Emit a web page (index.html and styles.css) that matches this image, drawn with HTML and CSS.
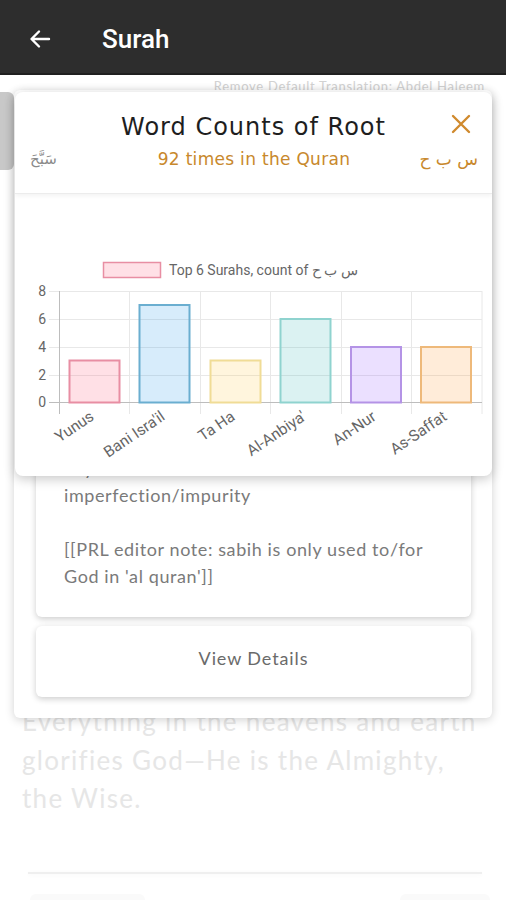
FILE: index.html
```html
<!DOCTYPE html>
<html lang="en">
<head>
    <meta charset="UTF-8">
    <meta name="viewport" content="width=device-width, initial-scale=1.0">
    <title>Surah</title>
    <link rel="stylesheet" href="styles.css">
</head>
<body>
    <header class="appbar">
        <svg class="back" width="24" height="24" viewBox="0 0 24 24">
            <path d="M21 12H4M11 4.5L3.5 12l7.5 7.5" fill="none" stroke="#fff" stroke-width="2.4" stroke-linecap="round" stroke-linejoin="round"/>
        </svg>
        <span class="appbar-title">Surah</span>
    </header>

    <main class="page">
        <p class="translation-note">Remove Default Translation: Abdel Haleem</p>
        <div class="verse-space"></div>
        <p class="verse-text">Everything in the heavens and earth glorifies God—He is the Almighty, the Wise.</p>
        <hr class="divider">
        <div class="verse-actions">
            <span class="ghost-btn"></span>
            <span class="ghost-btn small"></span>
        </div>

        <!-- root details sheet (behind the chart popup) -->
        <div class="side-tab"></div>
        <div class="root-sheet">
            <div class="meaning-card">
                <p>glorify, praise, exalt, declare God free from any</p>
                <p>imperfection/impurity</p>
                <p>&nbsp;</p>
                <p>[[PRL editor note: sabih is only used to/for God in 'al quran']]</p>
            </div>
            <div class="details-card">View Details</div>
        </div>

        <!-- word counts popup -->
        <div class="counts-popup">
            <div class="popup-head">
                <h2 class="popup-title">Word Counts of Root</h2>
                <span class="popup-close">
                    <svg width="22" height="22" viewBox="0 0 22 22">
                        <path d="M3 3l16 16M19 3L3 19" stroke="#d08a2e" stroke-width="2.4" stroke-linecap="round"/>
                    </svg>
                </span>
                <div class="popup-sub">
                    <span class="word-ar" lang="ar" dir="rtl">سَبَّحَ</span>
                    <span class="times">92 times in the Quran</span>
                    <span class="root-ar" lang="ar" dir="rtl">س ب ح</span>
                </div>
            </div>
            <div class="chart-box">
                <svg class="chart" width="477" height="282" viewBox="0 0 477 282">
                    <!-- legend -->
                    <rect x="88.5" y="68.5" width="57" height="15" fill="rgba(255,99,132,0.2)" stroke="#e88ea3" stroke-width="1.5"/>
                    <text class="legend" x="154" y="81">Top 6 Surahs, count of <tspan direction="rtl" unicode-bidi="embed">س ب ح</tspan></text>

                    <!-- grid -->
                    <g stroke="#e8e8e8" stroke-width="1">
                        <line x1="34" y1="97.5" x2="467" y2="97.5"/>
                        <line x1="34" y1="125.5" x2="467" y2="125.5"/>
                        <line x1="34" y1="153.5" x2="467" y2="153.5"/>
                        <line x1="34" y1="181.5" x2="467" y2="181.5"/>
                        <line x1="114.5" y1="97" x2="114.5" y2="220"/>
                        <line x1="185.5" y1="97" x2="185.5" y2="220"/>
                        <line x1="255.5" y1="97" x2="255.5" y2="220"/>
                        <line x1="326.5" y1="97" x2="326.5" y2="220"/>
                        <line x1="396.5" y1="97" x2="396.5" y2="220"/>
                        <line x1="467" y1="97" x2="467" y2="220"/>
                    </g>
                    <g stroke="#bdbdbd" stroke-width="1">
                        <line x1="34" y1="208.5" x2="467" y2="208.5"/>
                        <line x1="44.5" y1="97" x2="44.5" y2="220"/>
                    </g>

                    <!-- y labels -->
                    <g class="tick">
                        <text x="31" y="102" text-anchor="end">8</text>
                        <text x="31" y="130" text-anchor="end">6</text>
                        <text x="31" y="158" text-anchor="end">4</text>
                        <text x="31" y="186" text-anchor="end">2</text>
                        <text x="31" y="213" text-anchor="end">0</text>
                    </g>

                    <!-- bars -->
                    <rect x="54.5" y="166.5" width="50" height="42" fill="rgba(255,99,132,0.2)" stroke="#e88ea3" stroke-width="2"/>
                    <rect x="124.5" y="111" width="50" height="97.5" fill="rgba(54,162,235,0.2)" stroke="#6aaed0" stroke-width="2"/>
                    <rect x="195.5" y="166.5" width="50" height="42" fill="rgba(255,206,86,0.2)" stroke="#f0dc96" stroke-width="2"/>
                    <rect x="265.5" y="125" width="50" height="83.5" fill="rgba(75,192,192,0.2)" stroke="#8fd3cf" stroke-width="2"/>
                    <rect x="336" y="153" width="50" height="55.5" fill="rgba(153,102,255,0.2)" stroke="#b493e6" stroke-width="2"/>
                    <rect x="406" y="153" width="50" height="55.5" fill="rgba(255,159,64,0.2)" stroke="#eeb97a" stroke-width="2"/>

                    <!-- x labels -->
                    <g class="tick xlabels">
                        <text text-anchor="end" transform="translate(80 225) rotate(-34)">Yunus</text>
                        <text text-anchor="end" transform="translate(151 225) rotate(-34)">Bani Isra'il</text>
                        <text text-anchor="end" transform="translate(221 225) rotate(-34)">Ta Ha</text>
                        <text text-anchor="end" transform="translate(292 225) rotate(-34)">Al-Anbiya'</text>
                        <text text-anchor="end" transform="translate(362 225) rotate(-34)">An-Nur</text>
                        <text text-anchor="end" transform="translate(433 225) rotate(-34)">As-Saffat</text>
                    </g>
                </svg>
            </div>
        </div>
    </main>
</body>
</html>
```

FILE: styles.css
```css
body {
    margin: 0;
    font-family: "Open Sans", "Noto Sans", sans-serif;
    background-color: #fff;
}
.appbar {
    height: 75px;
    box-sizing: border-box;
    padding: 5px 0 0 28px;
    background-color: #2d2d2d;
    border-bottom: 2px solid #1f1f1f;
    display: flex;
    align-items: center;
}
.appbar-title {
    margin-left: 50px;
    color: #fff;
    font-family: Roboto, sans-serif;
    font-weight: 500;
    font-size: 26px;
}
.page {
    position: relative;
    height: 825px;
    overflow: hidden;
}
.translation-note {
    margin: 3px 21px 0 0;
    text-align: right;
    font-family: Lato, sans-serif;
    font-size: 13px;
    letter-spacing: 0.7px;
    color: #d2d2d2;
}
.verse-space {
    height: 608px;
}
.verse-text {
    margin: 0 20px 0 22px;
    font-family: Lato, sans-serif;
    font-size: 26px;
    letter-spacing: 1.3px;
    line-height: 38.5px;
    color: #e6e6e6;
}
.divider {
    margin: 54px 24px 0 28px;
    border: none;
    height: 2px;
    background-color: #efefef;
    box-shadow: 0 1px 4px rgba(0, 0, 0, 0.04);
}
.verse-actions {
    display: flex;
    justify-content: space-between;
    padding: 20px 16px 0 30px;
}
.ghost-btn {
    width: 115px;
    height: 12px;
    background-color: #fafafa;
    border-radius: 6px;
}
.ghost-btn.small {
    width: 90px;
}
.side-tab {
    position: absolute;
    left: 0;
    top: 17px;
    width: 14px;
    height: 78px;
    background-color: #c8c8c8;
    border-radius: 0 6px 6px 0;
}
.root-sheet {
    position: absolute;
    left: 14px;
    top: 15px;
    width: 478px;
    height: 628px;
    box-sizing: border-box;
    background-color: #fff;
    border-radius: 6px;
    box-shadow: 0 2px 10px rgba(0, 0, 0, 0.18);
    display: flex;
    flex-direction: column;
    justify-content: flex-end;
    gap: 9px;
    padding: 0 21px 21px 22px;
}
.meaning-card, .details-card {
    background-color: #fff;
    border-radius: 6px;
    box-shadow: 0 2px 6px rgba(0, 0, 0, 0.2);
}
.meaning-card {
    padding: 10px 24px 27px 28px;
}
.meaning-card p {
    margin: 0;
    font-family: Lato, sans-serif;
    font-size: 18px;
    letter-spacing: 0.6px;
    line-height: 27px;
    color: #7a7a7a;
}
.details-card {
    height: 71px;
    box-sizing: border-box;
    padding-bottom: 8px;
    display: flex;
    align-items: center;
    justify-content: center;
    font-family: Lato, sans-serif;
    font-size: 18px;
    letter-spacing: 0.9px;
    color: #6a6a6a;
}
.counts-popup {
    position: absolute;
    left: 15px;
    top: 17px;
    width: 477px;
    height: 384px;
    background-color: #fff;
    border-radius: 8px;
    box-shadow: 0 3px 12px rgba(0, 0, 0, 0.22);
    overflow: hidden;
}
.popup-head {
    position: relative;
    height: 102px;
    border-bottom: 1px solid #ececec;
    box-shadow: 0 2px 4px rgba(0, 0, 0, 0.05);
    padding-top: 21px;
    box-sizing: border-box;
}
.popup-title {
    margin: 0;
    text-align: center;
    font-family: "DejaVu Sans", sans-serif;
    font-weight: normal;
    font-size: 24px;
    letter-spacing: 1px;
    line-height: 28px;
    color: #1e1e1e;
}
.popup-close {
    position: absolute;
    right: 20px;
    top: 21px;
}
.popup-sub {
    display: flex;
    align-items: center;
    justify-content: space-between;
    padding: 0 14px 0 15px;
    margin-top: 8px;
}
.word-ar {
    font-family: "DejaVu Sans", sans-serif;
    font-size: 15px;
    color: #8a8a8a;
    width: 80px;
    text-align: left;
}
.times {
    font-family: "DejaVu Sans", sans-serif;
    font-size: 17px;
    letter-spacing: 0.3px;
    color: #c8882c;
}
.root-ar {
    font-family: "DejaVu Sans", sans-serif;
    font-size: 17px;
    color: #c8882c;
    width: 80px;
    text-align: right;
}
.chart {
    display: block;
}
.legend {
    font-family: Roboto, sans-serif;
    font-size: 14px;
    fill: #666;
}
.tick {
    font-family: Roboto, sans-serif;
    font-size: 14px;
    fill: #666;
}
.xlabels {
    font-size: 15.5px;
}
```
